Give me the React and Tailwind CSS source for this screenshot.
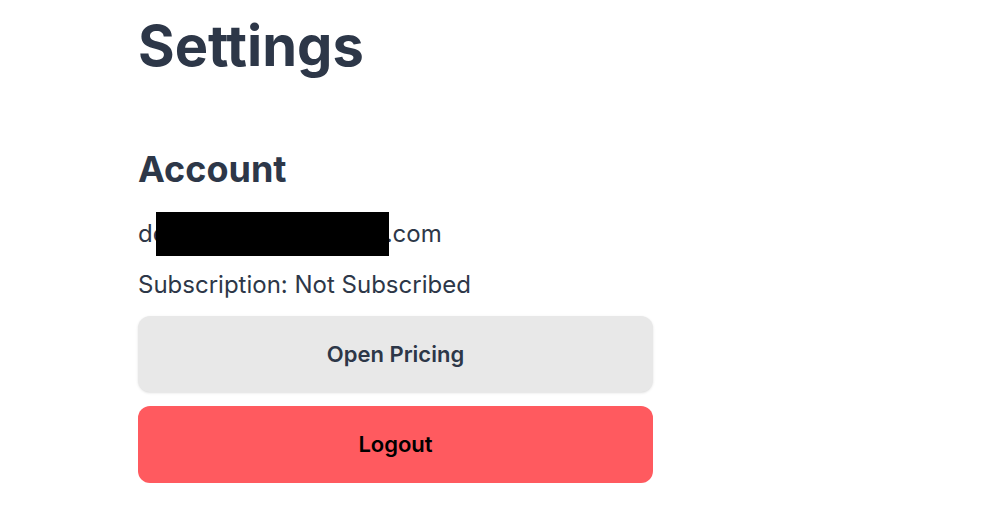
export default function App() {
  return (
    <div className="min-h-screen bg-white font-['Inter','Liberation_Sans',sans-serif] text-[#2d3748]">
      <div className="w-[515px] ml-[138px] pt-[18px]">
        {/* Page title */}
        <h1 className="text-[56px] leading-none font-bold">Settings</h1>

        {/* Account */}
        <section className="mt-[77px]">
          <h2 className="text-[36px] leading-none font-bold">Account</h2>
          <p className="mt-[25px] text-[24px] leading-none flex items-center">
            <span>de</span>
            <span className="relative z-10 inline-block w-[233px] h-[44px] bg-black ml-[-11px]"></span>
            <span className="-ml-[3px]">.com</span>
          </p>
          <p className="mt-[17px] text-[24px] leading-none">Subscription: Not Subscribed</p>

          <button className="mt-[19px] w-full h-[76px] rounded-xl bg-[#e8e8e8] shadow-sm text-[22px] font-semibold text-[#2d3748]">
            Open Pricing
          </button>
          <button className="mt-[14px] w-full h-[77px] rounded-xl bg-[#ff5a5f] text-[22px] font-semibold text-black">
            Logout
          </button>
        </section>
      </div>
    </div>
  );
}
